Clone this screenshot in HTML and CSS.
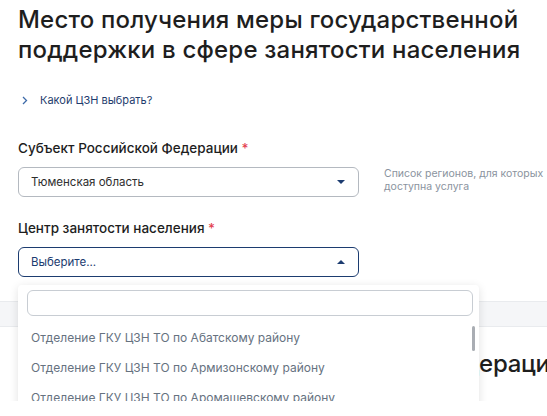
FILE: index.html
```html
<!DOCTYPE html>
<html lang="ru">
<head>
  <meta charset="UTF-8" />
  <meta name="viewport" content="width=device-width, initial-scale=1" />
  <title>Место получения меры</title>
  <link rel="stylesheet" href="styles.css">
</head>
<body>

  <main class="page">
    <section class="form-block">
      <h1 class="title">Место получения меры государственной поддержки в сфере занятости населения</h1>

      <a class="help-link" href="#">
        <svg class="help-chevron" width="6" height="9" viewBox="0 0 6 9"><path d="M1 1l3.5 3.5L1 8" fill="none" stroke="currentColor" stroke-width="1.3"/></svg>
        Какой ЦЗН выбрать?
      </a>

      <div class="field">
        <label class="field-label">Субъект Российской Федерации <span class="req">*</span></label>
        <div class="field-row">
          <div class="select">
            <span class="select-value">Тюменская область</span>
            <span class="arrow arrow-down"></span>
          </div>
          <p class="hint">Список регионов, для которых доступна услуга</p>
        </div>
      </div>

      <div class="field">
        <label class="field-label">Центр занятости населения <span class="req">*</span></label>
        <div class="field-row">
          <div class="select-wrap">
            <div class="select select-open">
              <span class="select-value">Выберите...</span>
              <span class="arrow arrow-up"></span>
            </div>

            <div class="dropdown">
              <input class="dropdown-search" type="text" />
              <ul class="options">
                <li>Отделение ГКУ ЦЗН ТО по Абатскому району</li>
                <li>Отделение ГКУ ЦЗН ТО по Армизонскому району</li>
                <li>Отделение ГКУ ЦЗН ТО по Аромашевскому району</li>
              </ul>
              <div class="scroll-thumb"></div>
            </div>
          </div>
        </div>
      </div>
    </section>

    <div class="band"></div>

    <section class="next-block">
      <h2 class="subtitle">Адрес места работы в Российской Федерации</h2>
    </section>
  </main>

</body>
</html>
```

FILE: styles.css
```css
body {
  margin: 0;
  font-family: Inter, "Open Sans", Arial, sans-serif;
  background-color: #ffffff;
  color: #0b1f33;
  overflow: hidden;
}

.form-block {
  padding: 5px 18px 24px;
}

.title {
  margin: 0;
  font-size: 24px;
  line-height: 30px;
  font-weight: 500;
  color: #1e1e1e;
  letter-spacing: 0.2px;
}

.help-link {
  display: flex;
  align-items: center;
  gap: 12px;
  margin: 26px 0 0 4px;
  font-size: 11px;
  color: #1f3d6e;
  text-decoration: none;
  height: 18px;
}

.help-chevron {
  color: #3d6aa8;
}

.field {
  margin-top: 30px;
}

.field + .field {
  margin-top: 22px;
}

.field-label {
  display: block;
  font-size: 13.5px;
  font-weight: 500;
  color: #1e1e1e;
  line-height: 18px;
  margin-bottom: 10px;
}

.req {
  color: #e3414f;
}

.field-row {
  display: flex;
  align-items: flex-start;
  gap: 25px;
}

.select-wrap {
  position: relative;
  flex: none;
}

.select {
  box-sizing: border-box;
  flex: none;
  width: 341px;
  height: 30px;
  border: 1px solid #b4b9c0;
  border-radius: 6px;
  display: flex;
  align-items: center;
  justify-content: space-between;
  padding: 0 12px;
  font-size: 11.5px;
  color: #2e2e2e;
}

.select-open {
  border-color: #1c3c70;
  color: #1c3c70;
}

.arrow {
  width: 0;
  height: 0;
  border-left: 4px solid transparent;
  border-right: 4px solid transparent;
  margin-right: 1px;
}

.arrow-down {
  border-top: 4px solid #1c3c70;
}

.arrow-up {
  border-bottom: 4px solid #1c3c70;
}

.hint {
  flex: none;
  margin: 0;
  font-size: 10.5px;
  line-height: 13px;
  color: #8a939e;
  width: 163px;
}

.dropdown {
  position: absolute;
  top: 38px;
  left: 0;
  width: 461px;
  height: 140px;
  background-color: #ffffff;
  box-shadow: 0 2px 10px rgba(0, 0, 0, 0.12);
  border-radius: 4px;
  z-index: 10;
  padding: 5px 6px 0 9px;
  box-sizing: border-box;
}

.dropdown-search {
  display: block;
  box-sizing: border-box;
  width: 446px;
  height: 26px;
  border: 1px solid #c8cdd3;
  border-radius: 6px;
  outline: none;
}

.options {
  list-style: none;
  margin: 7px 0 0;
  padding: 0;
}

.options li {
  font-size: 12px;
  line-height: 30px;
  color: #66727f;
  padding-left: 4px;
}

.scroll-thumb {
  position: absolute;
  top: 41px;
  right: 4px;
  width: 3px;
  height: 25px;
  border-radius: 2px;
  background-color: #a9adb3;
}

.band {
  height: 24px;
  background-color: #f5f6f8;
  border-top: 1px solid #e9ebee;
  border-bottom: 1px solid #e9ebee;
}

.next-block {
  padding: 22px 18px;
}

.subtitle {
  margin: 0;
  font-size: 24px;
  line-height: 30px;
  font-weight: 500;
  color: #1e1e1e;
  white-space: nowrap;
  letter-spacing: -0.3px;
}
```
